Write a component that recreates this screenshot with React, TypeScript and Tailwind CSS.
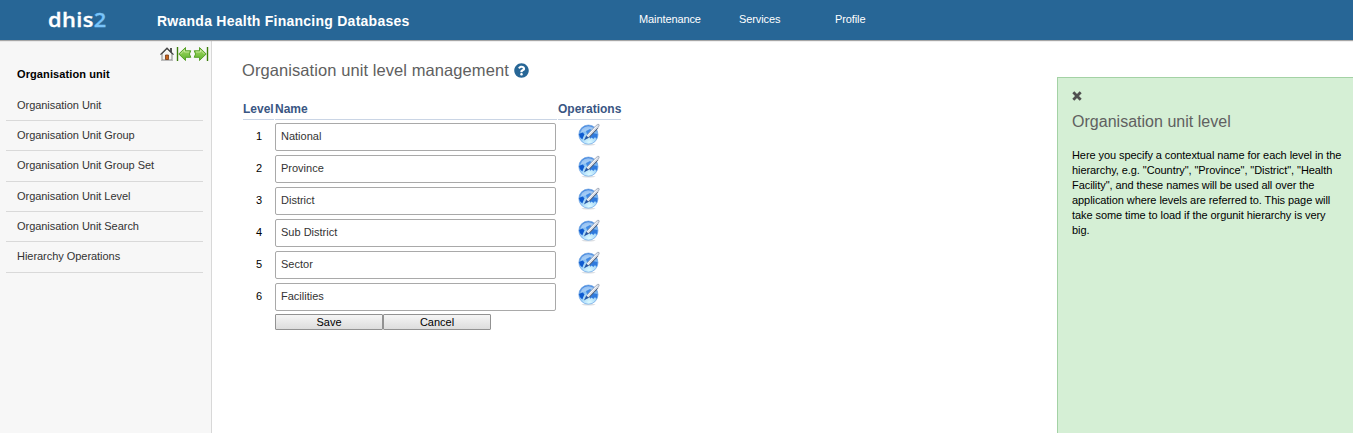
import React from "react";
import { FaQuestionCircle } from "react-icons/fa";

const MENU = [
  "Organisation Unit",
  "Organisation Unit Group",
  "Organisation Unit Group Set",
  "Organisation Unit Level",
  "Organisation Unit Search",
  "Hierarchy Operations",
];

const LEVELS = ["National", "Province", "District", "Sub District", "Sector", "Facilities"];

const HELP_LINES = [
  "Here you specify a contextual name for each level in the",
  'hierarchy, e.g. "Country", "Province", "District", "Health',
  'Facility", and these names will be used all over the',
  "application where levels are referred to. This page will",
  "take some time to load if the orgunit hierarchy is very",
  "big.",
];

function HomeIcon() {
  return (
    <svg width="16" height="16" viewBox="0 0 16 16" className="block">
      <path d="M3 8 8 3l5 5v6H3z" fill="#f4f4f2" stroke="#888" strokeWidth="1" />
      <path d="M11 2h2v4h-2z" fill="#555" />
      <path d="M1.5 8.6 8 2.1l6.5 6.5" fill="none" stroke="#444" strokeWidth="1.3" />
      <path d="M6.5 9h3v4.5h-3z" fill="#c8641c" stroke="#753814" strokeWidth=".8" />
      <path d="M2 14.5h12" stroke="#bbb" strokeWidth="1" />
    </svg>
  );
}

function ArrowIcon({ flip = false }: { flip?: boolean }) {
  return (
    <svg width="16" height="16" viewBox="0 0 16 16" className={flip ? "block -scale-x-100" : "block"}>
      <defs>
        <linearGradient id="arrowFill" x1="0" y1="0" x2="0" y2="1">
          <stop offset="0" stopColor="#a9d96a" />
          <stop offset="1" stopColor="#5db52c" />
        </linearGradient>
      </defs>
      <path d="M1.5 1v14" stroke="#397d08" strokeWidth="1.4" />
      <path d="M2.8 8 9.5 1.5v3.3h5.3L13.4 8l1.4 3.3H9.5v3.2z" fill="url(#arrowFill)" stroke="#57a12a" strokeWidth="1" />
      <path d="M4.5 8 8.5 4v2H13" fill="none" stroke="#cdeba4" strokeWidth=".8" />
    </svg>
  );
}

function GlobePenIcon() {
  return (
    <svg width="22" height="24" viewBox="0 0 22 24" className="block">
      <defs>
        <radialGradient id="globe" cx=".55" cy=".9" r=".9">
          <stop offset="0" stopColor="#dcfaff" />
          <stop offset=".5" stopColor="#9ed2f8" />
          <stop offset="1" stopColor="#3f82dc" />
        </radialGradient>
      </defs>
      <ellipse cx="10.5" cy="21.6" rx="7" ry=".9" fill="#dcdfe3" />
      <circle cx="10.4" cy="11.6" r="9.6" fill="url(#globe)" stroke="#5f9ae0" strokeWidth=".6" />
      <path d="M4 6Q9 1 16 5L13 9Q8 7 2.5 10z" fill="#d9edff" opacity=".5" />
      <path d="M1 11 4.5 9.5l2 1.8-1.2 2.7-1 2.5Q1 14 1 11z" fill="#0f5bd0" />
      <path d="m11.5 13.5 3.5-3.5 4.5 1q.3 2.8-1.2 5l-1.2-2-1.8 2-1.6-1.5-1.5 1.3z" fill="#2f7add" />
      <path d="m8 8 4-2 1.5 1L9 11.5z" fill="#4089e4" />
      <path d="m7.2 15.7 1.4-3.2L17.5 3q2.4-2.4 3.5-1.6.8.9-1 3.3l-9.2 9.7z" fill="#d8dde6" stroke="#818c9f" strokeWidth=".6" />
      <path d="m9 13.3 9.5-10" stroke="#fff" strokeWidth=".8" />
      <path d="m5.8 17.4 2.6-4.6 2.4 1.9z" fill="#2457a6" />
      <path d="m10.8 14.7 9-9.4" stroke="#4c5970" strokeWidth="1" />
    </svg>
  );
}

function CloseIcon() {
  return (
    <svg width="10" height="10" viewBox="0 0 10 10" className="block">
      <path d="m1.3 1.3 7.4 7.4M8.7 1.3 1.3 8.7" stroke="#505050" strokeWidth="2.8" />
    </svg>
  );
}

export default function App() {
  return (
    <div className="flex h-[433px] w-full flex-col overflow-hidden bg-white font-['Liberation_Sans',sans-serif] text-[11px] text-black">
      <header className="z-10 flex h-10 shrink-0 bg-[#276696] text-white shadow-[0_1px_1px_#a6a6a6]">
        <div className="w-[157px] shrink-0 pl-12">
          <span className="inline-block origin-left scale-x-[1.12] font-['Open_Sans',sans-serif] text-[19.5px] leading-[39px] font-semibold tracking-[0.35px] [-webkit-text-stroke:0.3px]">
            dhis<span className="text-[#79c4fa]">2</span>
          </span>
        </div>
        <div className="w-[482px] shrink-0 pt-px text-[14px] leading-10 font-bold tracking-[0.25px] whitespace-nowrap">
          Rwanda Health Financing Databases
        </div>
        <nav className="flex leading-[39px] tracking-[-0.1px]">
          <span className="w-[100px]">Maintenance</span>
          <span className="w-24">Services</span>
          <span>Profile</span>
        </nav>
      </header>

      <div className="flex min-h-0 flex-1">
        <aside className="w-[212px] shrink-0 border-r border-[#d8d8d8] bg-[#f7f7f7] pt-1.5">
          <div className="flex h-4 justify-end gap-px pr-[2px] pl-4">
            <HomeIcon />
            <ArrowIcon />
            <ArrowIcon flip />
          </div>
          <h2 className="mt-[5px] pl-[17px] leading-[15px] font-bold tracking-[0.1px]">Organisation unit</h2>
          <ul className="mt-[8.8px] mr-2 ml-1.5">
            {MENU.map((label) => (
              <li key={label} className="h-[30.3px] border-b border-[#d9d9d9] pl-[11px] leading-[28.4px] tracking-[-0.04px] text-[#333]">
                {label}
              </li>
            ))}
          </ul>
        </aside>

        <main className="flex-1 pl-[30px]">
          <h1 className="mt-5 flex h-5 items-center text-[16.5px] leading-5 tracking-[0.08px] text-[#606060]">
            Organisation unit level management
            <FaQuestionCircle className="ml-[5px] size-[15px] text-[#276696]" />
          </h1>
          <div className="mt-5 ml-px w-[378px]">
            <div className="grid grid-cols-[31px_282px_63px] gap-x-px text-[12px] leading-[15px] font-bold text-[#3a5683]">
              {["Level", "Name", "Operations"].map((label) => (
                <div key={label} className="h-5 border-b border-[#cad5e5] pt-0.5 whitespace-nowrap">
                  {label}
                </div>
              ))}
            </div>
            <div className="mt-[3px] flex flex-col gap-1">
              {LEVELS.map((name, i) => (
                <div key={name} className="flex h-7">
                  <div className="w-8 shrink-0 text-center leading-[27px]">{i + 1}</div>
                  <input
                    defaultValue={name}
                    className="h-7 w-[281px] shrink-0 rounded-[2px] border border-[#a9a9a9] bg-white px-[5px] pb-[2px] text-[#333] outline-none"
                  />
                  <div className="ml-[22px]">
                    <GlobePenIcon />
                  </div>
                </div>
              ))}
            </div>
            <div className="mt-[3px] ml-8 flex">
              {["Save", "Cancel"].map((label) => (
                <button
                  key={label}
                  className="h-4 w-[108px] rounded-[1px] border border-[#929292] bg-linear-to-b from-[#f5f5f5] to-[#dddddd] text-center leading-[14px]"
                >
                  {label}
                </button>
              ))}
            </div>
          </div>
        </main>

        <aside className="mt-[37px] w-[296px] shrink-0 border-t border-l border-[#a4d2a5] bg-[#d5efd5] pt-[13px] pl-3.5">
          <CloseIcon />
          <h2 className="mt-[11px] text-[16px] leading-5 tracking-[0.02px] text-[#606060]">Organisation unit level</h2>
          <p className="mt-4 leading-[15px] tracking-[-0.07px]">
            {HELP_LINES.map((line) => (
              <span key={line} className="block whitespace-nowrap">{line}</span>
            ))}
          </p>
        </aside>
      </div>
    </div>
  );
}
